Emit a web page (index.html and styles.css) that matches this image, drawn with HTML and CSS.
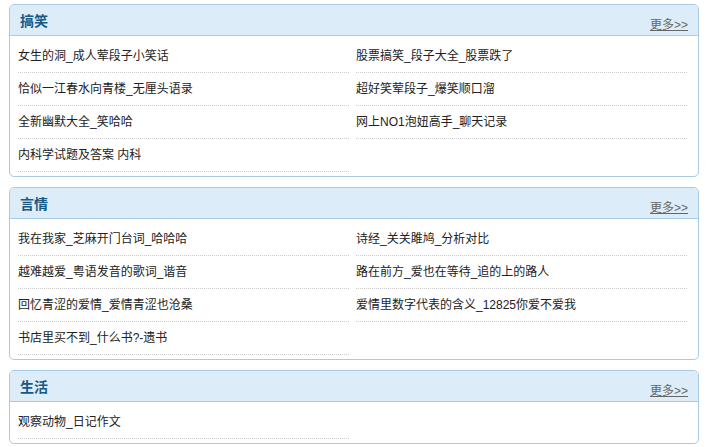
FILE: index.html
```html
<!DOCTYPE html>
<html lang="zh-CN">
<head>
    <meta charset="UTF-8">
    <title>分类</title>
    <link rel="stylesheet" href="styles.css">
</head>
<body>
    <div class="box">
        <div class="box-head">
            <span class="box-title">搞笑</span>
            <a class="more" href="#">更多&gt;&gt;</a>
        </div>
        <ul class="list">
            <li><a href="#">女生的洞_成人荤段子小笑话</a></li>
            <li><a href="#">股票搞笑_段子大全_股票跌了</a></li>
            <li><a href="#">恰似一江春水向青楼_无厘头语录</a></li>
            <li><a href="#">超好笑荤段子_爆笑顺口溜</a></li>
            <li><a href="#">全新幽默大全_笑哈哈</a></li>
            <li><a href="#">网上NO1泡妞高手_聊天记录</a></li>
            <li><a href="#">内科学试题及答案 内科</a></li>
        </ul>
    </div>

    <div class="box">
        <div class="box-head">
            <span class="box-title">言情</span>
            <a class="more" href="#">更多&gt;&gt;</a>
        </div>
        <ul class="list">
            <li><a href="#">我在我家_芝麻开门台词_哈哈哈</a></li>
            <li><a href="#">诗经_关关雎鸠_分析对比</a></li>
            <li><a href="#">越难越爱_粤语发音的歌词_谐音</a></li>
            <li><a href="#">路在前方_爱也在等待_追的上的路人</a></li>
            <li><a href="#">回忆青涩的爱情_爱情青涩也沧桑</a></li>
            <li><a href="#">爱情里数字代表的含义_12825你爱不爱我</a></li>
            <li><a href="#">书店里买不到_什么书?-遗书</a></li>
        </ul>
    </div>

    <div class="box">
        <div class="box-head">
            <span class="box-title">生活</span>
            <a class="more" href="#">更多&gt;&gt;</a>
        </div>
        <ul class="list">
            <li><a href="#">观察动物_日记作文</a></li>
        </ul>
    </div>
</body>
</html>
```

FILE: styles.css
```css
body {
    margin: 0;
    padding: 4px 7px 0 9px;
    background-color: #fff;
    font-family: "Liberation Sans", "Noto Sans CJK SC", sans-serif;
    font-size: 12px;
    color: #222;
}

.box {
    border: 1px solid #a8cbe3;
    border-radius: 5px;
    margin-bottom: 10px;
    overflow: hidden;
}

.box-head {
    height: 30px;
    background-color: #dcedf9;
    border-bottom: 1px solid #a8cbe3;
    display: flex;
    align-items: center;
    justify-content: space-between;
    padding: 0 10px;
}

.box-title {
    font-size: 14px;
    font-weight: bold;
    color: #175985;
}

.more {
    color: #666;
    font-size: 12px;
    margin-top: 6px;
    text-decoration: underline;
}

.list {
    list-style: none;
    margin: 0;
    padding: 4px 11px 4px 8px;
    display: grid;
    grid-template-columns: 1fr 1fr;
    column-gap: 7px;
}

.list li {
    height: 32px;
    line-height: 32px;
    border-bottom: 1px dotted #ccc;
}

.list a {
    color: #222;
    text-decoration: none;
}
```
